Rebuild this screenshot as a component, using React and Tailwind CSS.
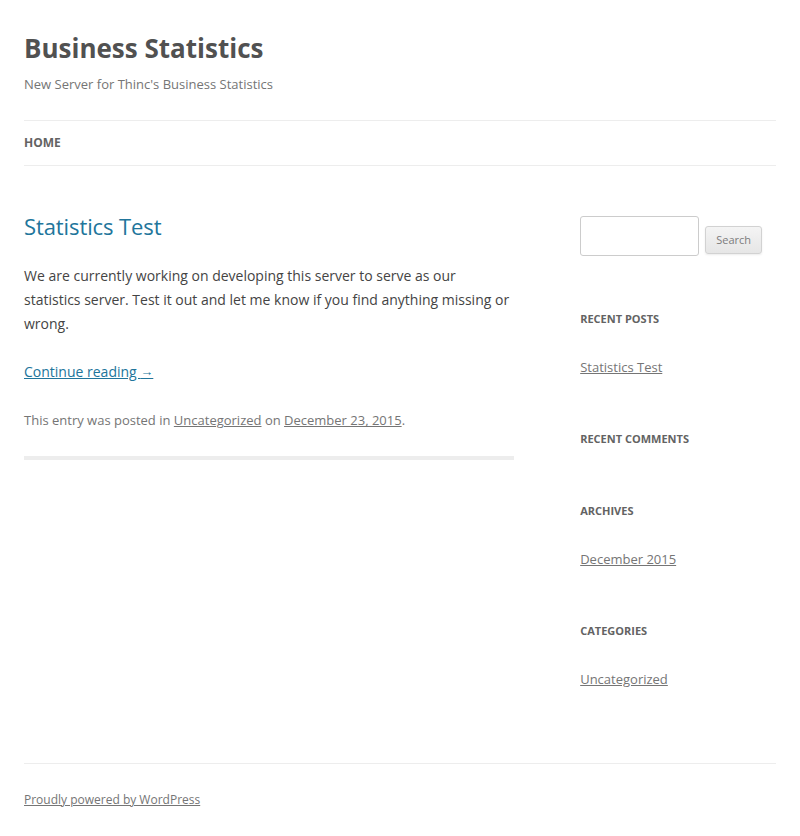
import React from 'react';

const widgets = [
    { title: 'Recent Posts', links: ['Statistics Test'] },
    { title: 'Recent Comments', links: [] },
    { title: 'Archives', links: ['December 2015'] },
    { title: 'Categories', links: ['Uncategorized'] },
];

const Widget = ({ title, links }) => (
    <aside className="mb-12">
        <h3 className="text-[11px] leading-6 font-bold uppercase text-[#636363]">{title}</h3>
        {links.length > 0 && (
            <ul className="mt-6">
                {links.map((l) => (
                    <li key={l} className="text-[13px] leading-6">
                        <a href="#" className="text-[#757575] underline">{l}</a>
                    </li>
                ))}
            </ul>
        )}
    </aside>
);

export default function App() {
    return (
        <div className="bg-white px-6 text-[14px] leading-6 text-[#444]" style={{ fontFamily: '"Open Sans", "Liberation Sans", sans-serif' }}>
            {/* header */}
            <header className="py-6 pb-0">
                <h1 className="text-[26px] leading-[48px] font-bold text-[#515151]">Business Statistics</h1>
                <h2 className="text-[13px] leading-6 text-[#757575]">New Server for Thinc's Business Statistics</h2>
                <nav className="mt-6 border-y border-[#ededed]">
                    <ul className="flex">
                        <li className="text-[12px] leading-[44px] font-bold uppercase text-[#636363]">Home</li>
                    </ul>
                </nav>
            </header>

            <div className="flex justify-between mt-12">
                {/* content */}
                <main className="w-[65.104%]">
                    <article className="border-b-4 border-[#ededed] pb-6 mb-[72px]">
                        <h1 className="-mt-px mb-[25px] text-[22px] leading-[26.4px] tracking-[-0.1px] text-[#21759b]">Statistics Test</h1>
                        <div>
                            <p className="mb-6">
                                We are currently working on developing this server to serve as our statistics server. Test it out and let me know if you find anything missing or wrong.
                            </p>
                            <p className="mb-6">
                                <a href="#" className="text-[#21759b] underline">Continue reading <span className="relative -top-px text-[13px]">→</span></a>
                            </p>
                        </div>
                        <footer className="text-[13px] leading-6 text-[#757575]">
                            This entry was posted in <a href="#" className="underline">Uncategorized</a> on <a href="#" className="underline">December 23, 2015</a>.
                        </footer>
                    </article>
                </main>

                {/* sidebar */}
                <div className="w-[26.042%]">
                    <aside className="mb-12">
                        <form className="flex items-end gap-[6px] pt-[2px] pb-[3px]">
                            <input type="text" className="w-[119px] h-10 border border-[#ccc] rounded-[3px] px-1.5 text-[12px]" />
                            <button type="button" className="mb-[2px] h-7 w-[57px] text-[11px] text-[#7c7c7c] bg-gradient-to-b from-[#f4f4f4] to-[#e6e6e6] border border-[#d2d2d2] rounded-[3px] shadow-[0_1px_2px_rgba(64,64,64,0.1)]">
                                Search
                            </button>
                        </form>
                    </aside>
                    {widgets.map((w) => (
                        <Widget key={w.title} {...w} />
                    ))}
                </div>
            </div>

            <footer className="border-t border-[#ededed] mt-6 py-6 text-[12px] leading-6">
                <a href="#" className="text-[#757575] underline">Proudly powered by WordPress</a>
            </footer>
        </div>
    );
}
